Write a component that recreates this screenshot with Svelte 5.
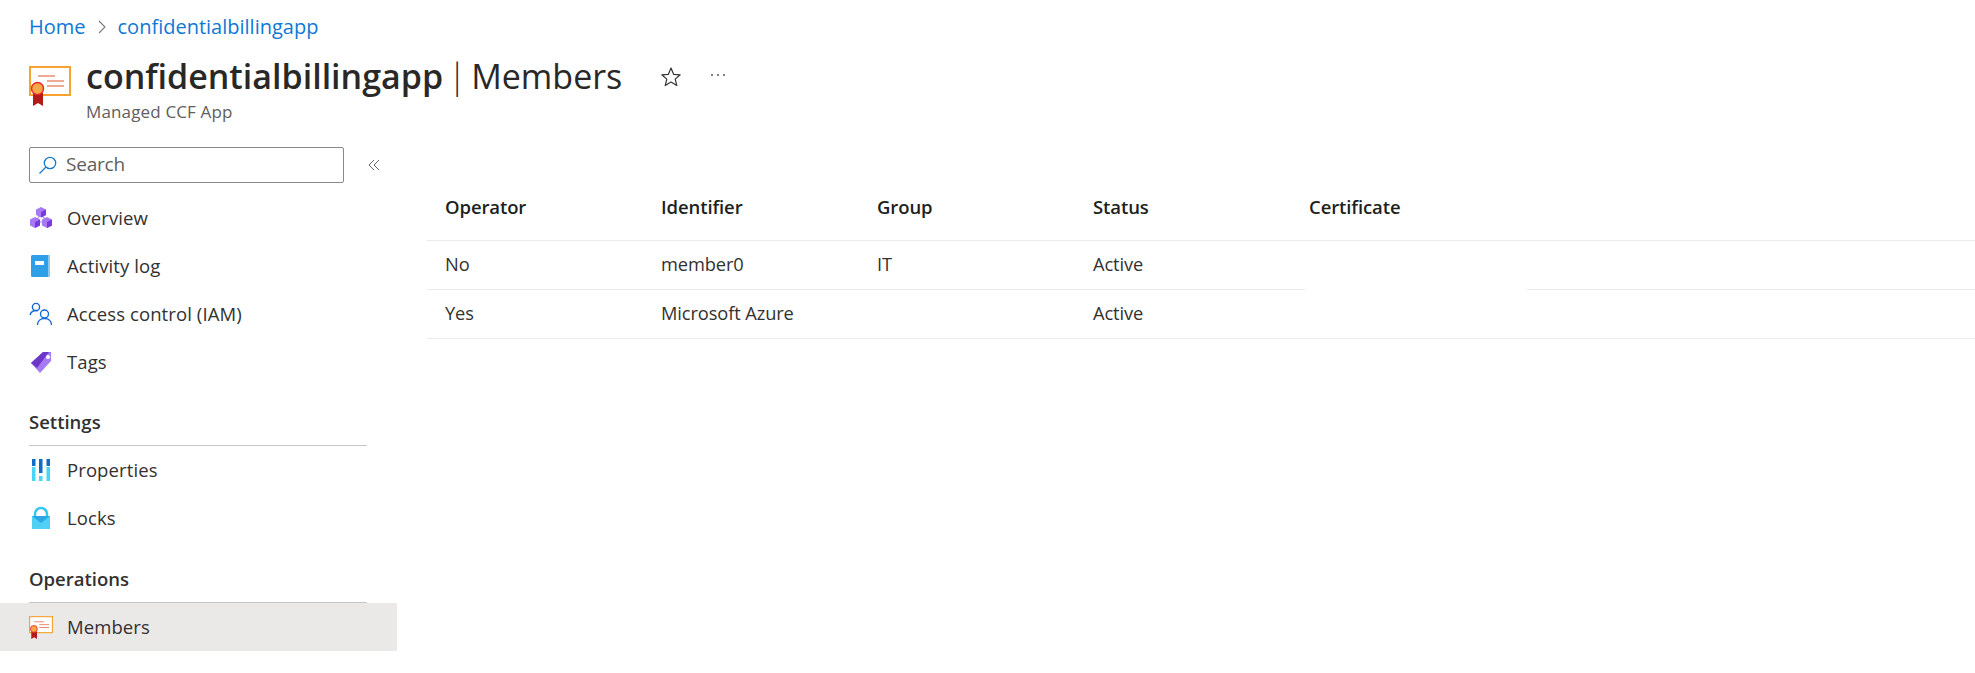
<script>
  const cols = ['Operator', 'Identifier', 'Group', 'Status', 'Certificate'];
  const rows = [
    ['No', 'member0', 'IT', 'Active'],
    ['Yes', 'Microsoft Azure', '', 'Active']
  ];
</script>

{#snippet cert(w, h)}
  <svg width={w} height={h} viewBox="0 0 42 40">
    <rect x="1" y="1" width="40" height="28" fill="#fff" stroke="#f6a331" stroke-width="2"/>
    <path d="M9 10h17M18 15h17M18 20h17" stroke="#e0562a" stroke-width="1.2"/>
    <path d="M4 27h10v13l-5-3-5 3z" fill="#b31b1b"/>
    <circle cx="8.500" cy="22.500" r="6" fill="#f7a94a" stroke="#e62b2b" stroke-width="1.500"/>
  </svg>
{/snippet}

<div class="page">
  <nav class="crumbs">
    <a href="#home">Home</a>
    <svg width="10" height="14" viewBox="0 0 10 14"><path d="M2 1l6 6-6 6" fill="none" stroke="#7a7a7a" stroke-width="1.100"/></svg>
    <a href="#app">confidentialbillingapp</a>
  </nav>

  <header class="head">
    <div class="logo">{@render cert(42, 40)}</div>
    <div class="titles">
      <div class="titleline">
        <h1><b>confidentialbillingapp</b> <span class="bar">|</span> Members</h1>
        <svg class="star" width="22" height="22" viewBox="0 0 22 22"><path d="M11 2l2.600 6.300 6.600.5-5 4.300 1.600 6.500L11 16.100l-5.800 3.500 1.600-6.500-5-4.300 6.600-.5z" fill="none" stroke="#333" stroke-width="1.200" stroke-linejoin="round"/></svg>
        <span class="dots"><i></i><i></i><i></i></span>
      </div>
      <div class="sub">Managed CCF App</div>
    </div>
  </header>

  <div class="body">
    <aside class="side">
      <div class="searchrow">
        <div class="search">
          <svg width="20" height="20" viewBox="0 0 20 20"><circle cx="12" cy="8" r="5.700" fill="none" stroke="#1a78c8" stroke-width="1.300"/><path d="M8 12l-6.500 6.500" stroke="#1a78c8" stroke-width="1.300"/></svg>
          <span>Search</span>
        </div>
        <svg class="coll" width="14" height="14" viewBox="0 0 14 14"><path d="M7 2L2 7l5 5M12 2L7 7l5 5" fill="none" stroke="#666" stroke-width="1"/></svg>
      </div>

      <div class="item">
        <svg width="24" height="24" viewBox="0 0 24 24">
          <path d="M12 8L6 16h12z" fill="none" stroke="#a98ae6" stroke-width="1.200"/>
          <path d="M12 1l5 2.500v5.500l-5 2.500-5-2.500V3.500z" fill="#a67af4"/><path d="M12 6l5-2.500v5.500l-5 2.500z" fill="#773adc"/>
          <path d="M6 11l5 2.500v6L6 22l-5-2.500v-6z" fill="#a67af4"/><path d="M6 16l5-2.500v6L6 22z" fill="#773adc"/>
          <path d="M18 11l5 2.500v6L18 22l-5-2.500v-6z" fill="#a67af4"/><path d="M18 16l5-2.500v6L18 22z" fill="#773adc"/>
        </svg>
        <span>Overview</span>
      </div>
      <div class="item">
        <svg width="24" height="24" viewBox="0 0 24 24">
          <rect x="2" y="1" width="19" height="22" rx="1.500" fill="#2f9fe8"/>
          <rect x="19" y="1" width="2" height="22" fill="#8fc9ee"/>
          <rect x="6" y="7" width="9" height="4" fill="#fff"/>
        </svg>
        <span>Activity log</span>
      </div>
      <div class="item">
        <svg width="24" height="24" viewBox="0 0 24 24" fill="none" stroke="#1365d8" stroke-width="1.400">
          <circle cx="7" cy="5" r="3.600"/><path d="M1 13c1-3 3-4.500 6-4.500 1 0 1.500.2 2 .4"/>
          <circle cx="15.500" cy="12" r="4"/><path d="M8.500 23c0-4 3-6.500 7-6.500s7 2.500 7 6.500"/>
        </svg>
        <span>Access control (IAM)</span>
      </div>
      <div class="item">
        <svg width="24" height="24" viewBox="0 0 24 24">
          <path d="M2 13L14 2h8v9L11 23z" fill="#a67af4"/>
          <path d="M2 13L14 2h6L8 18z" fill="#6e35c9"/>
          <circle cx="19" cy="7" r="2" fill="#fff"/>
        </svg>
        <span>Tags</span>
      </div>

      <h2>Settings</h2>
      <div class="item">
        <svg width="24" height="24" viewBox="0 0 24 24">
          <rect x="3" y="1" width="3.500" height="7" fill="#0f6cc8"/><rect x="3" y="9" width="3.500" height="14" fill="#48d6f8"/>
          <rect x="10" y="1" width="3.500" height="14" fill="#0f6cc8"/><rect x="10" y="18" width="3.500" height="5" fill="#48d6f8"/>
          <rect x="17.500" y="1" width="3.500" height="7" fill="#0f6cc8"/><rect x="17.500" y="9" width="3.500" height="14" fill="#48d6f8"/>
        </svg>
        <span>Properties</span>
      </div>
      <div class="item">
        <svg width="24" height="24" viewBox="0 0 24 24">
          <path d="M6 11V8a6 6 0 0 1 12 0v3" fill="none" stroke="#35c6f4" stroke-width="2.500"/>
          <rect x="3" y="10" width="18" height="13" fill="#50d0f5"/>
          <path d="M3 10l9 7 9-7z" fill="#2aa8e6"/>
        </svg>
        <span>Locks</span>
      </div>

      <h2 class="ops">Operations</h2>
      <div class="item active">
        {@render cert(24, 23)}
        <span>Members</span>
      </div>
    </aside>

    <main class="content">
      <div class="grid headrow">
        {#each cols as c}<div class="th">{c}</div>{/each}
      </div>
      {#each rows as r, i}
        <div class="grid row">
          {#each r as v}<div class="td">{v}</div>{/each}
          {#if i === 0}<div class="mask"></div>{/if}
        </div>
      {/each}
    </main>
  </div>
</div>

<style>
  :global(body) { margin: 0; background: #fff; }
  .page { width: 1975px; height: 673px; overflow: hidden; font-family: "Open Sans", "Noto Sans", sans-serif; color: #323130; }
  .crumbs { display: flex; align-items: center; gap: 9px; height: 28px; padding: 12px 0 1px 29px; font-size: 20px; }
  .crumbs a { color: #0f78d4; text-decoration: none; }
  .crumbs svg { margin: 2px 2px 0; }
  .head { display: flex; padding: 13px 0 0 29px; height: 67px; }
  .logo { width: 57px; padding-top: 12px; }
  .titleline { display: flex; align-items: center; height: 44px; }
  h1 { margin: 0; font-size: 34px; font-weight: 400; word-spacing: -4px; line-height: 44px; color: #292827; white-space: nowrap; }
  h1 b { font-weight: 600; }
  .bar { font-weight: 300; }
  .star { margin: 2px 0 0 38px; }
  .dots { display: flex; gap: 4px; margin: -2px 0 0 29px; }
  .dots i { width: 2px; height: 2px; background: #555; border-radius: 50%; }
  .sub { font-size: 17px; color: #605e5c; line-height: 23px; letter-spacing: 0.15px; margin-top: 2px; }
  .body { display: flex; margin-top: 26px; }
  .side { width: 397px; flex: none; }
  .searchrow { display: flex; align-items: center; padding-left: 29px; height: 36px; margin-bottom: 11px; }
  .search { box-sizing: border-box; width: 315px; height: 36px; border: 1px solid #8a8886; border-radius: 2px; display: flex; align-items: center; gap: 8px; padding-left: 8px; font-size: 19px; color: #605e5c; letter-spacing: -0.2px; }
  .search span { margin-bottom: 2px; }
  .coll { margin-left: 23px; }
  .item { display: flex; align-items: center; gap: 14px; height: 48px; padding-left: 29px; font-size: 18.500px; letter-spacing: 0.1px; color: #323130; }
  .item span { margin-bottom: 2px; }
  .item svg { flex: none; }
  .item.active { background: #ebe9e7; }
  h2 { box-sizing: border-box; margin: 24px 30px 0 29px; height: 36px; font-size: 18.500px; font-weight: 600; line-height: 24px; color: #323130; border-bottom: 1px solid #c8c6c4; }
  h2.ops { margin-top: 25px; }
  .content { flex: none; width: 1548px; margin: 0 0 0 30px; }
  .grid { display: grid; grid-template-columns: repeat(5, 216px) 1fr; position: relative; box-sizing: border-box; }
  .headrow { height: 94px; padding-top: 26px; border-bottom: 1px solid #edebe9; align-items: center; }
  .row { height: 49px; padding-bottom: 4px; border-bottom: 1px solid #edebe9; align-items: center; }
  .th { padding-left: 18px; font-size: 18.500px; font-weight: 600; color: #201f1e; letter-spacing: -0.1px; }
  .td { padding-left: 18px; font-size: 18.250px; color: #323130; letter-spacing: -0.1px; }
  .mask { position: absolute; left: 878px; width: 222px; bottom: -1px; height: 1px; background: #fff; }
</style>
